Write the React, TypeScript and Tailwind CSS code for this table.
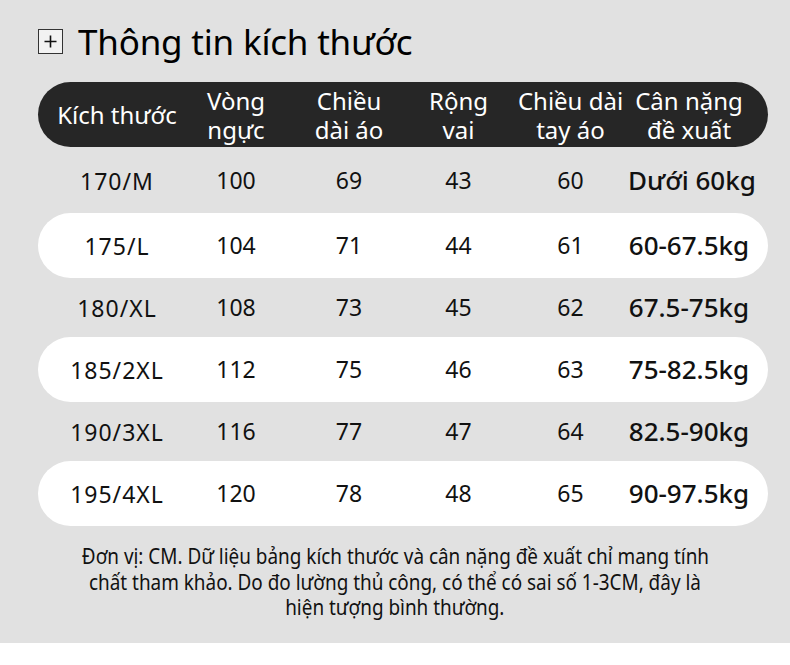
import React from "react";

const rows = [
  { size: "170/M", chest: "100", length: "69", shoulder: "43", sleeve: "60", weight: "Dưới 60kg" },
  { size: "175/L", chest: "104", length: "71", shoulder: "44", sleeve: "61", weight: "60-67.5kg" },
  { size: "180/XL", chest: "108", length: "73", shoulder: "45", sleeve: "62", weight: "67.5-75kg" },
  { size: "185/2XL", chest: "112", length: "75", shoulder: "46", sleeve: "63", weight: "75-82.5kg" },
  { size: "190/3XL", chest: "116", length: "77", shoulder: "47", sleeve: "64", weight: "82.5-90kg" },
  { size: "195/4XL", chest: "120", length: "78", shoulder: "48", sleeve: "65", weight: "90-97.5kg" },
];

const headers = [
  ["Kích thước"],
  ["Vòng", "ngực"],
  ["Chiều", "dài áo"],
  ["Rộng", "vai"],
  ["Chiều dài", "tay áo"],
  ["Cân nặng", "đề xuất"],
];

const grid = "grid grid-cols-[122px_116px_110px_109px_115px_122px] pl-[18px] pr-[18px] items-center";

const App = () => {
  return (
    <div className="w-[790px] h-[665px] bg-white" style={{ fontFamily: '"Noto Sans", "Open Sans", sans-serif' }}>
      <div className="h-[643px] bg-[#e1e1e1] text-[#111]">
        {/* Title */}
        <div className="flex items-center pl-[38px] pt-[19px] h-[64px]">
          <div className="w-[25px] h-[25px] border border-[#333] bg-[#f2f2f2] flex items-center justify-center">
            <svg width="15" height="15" viewBox="0 0 15 15">
              <path d="M7.5 1.5v12M1.5 7.5h12" stroke="#111" strokeWidth="1.6" />
            </svg>
          </div>
          <h1 className="ml-[15px] text-[35px] leading-none tracking-[-0.2px] text-black">Thông tin kích thước</h1>
        </div>

        {/* Table */}
        <div className="ml-[38px] w-[730px] mt-[18px]">
          <div className={`${grid} h-[65px] rounded-full bg-[#262626] text-white text-[24px] leading-[29px]`}>
            {headers.map((h, i) => (
              <div key={i} className="flex flex-col items-center text-center whitespace-nowrap">
                {h.map((line, j) => (
                  <span key={j}>{line}</span>
                ))}
              </div>
            ))}
          </div>

          {rows.map((r, i) => {
            const white = i % 2 === 1;
            const h = i === 0 ? "h-[66px]" : white ? "h-[65px]" : "h-[59px]";
            return (
              <div
                key={r.size}
                className={`${grid} ${h} text-[23px] ${white ? "bg-white rounded-full" : ""}`}
              >
                <div className="text-center tracking-[1px] pt-[2px]">{r.size}</div>
                <div className="text-center">{r.chest}</div>
                <div className="text-center">{r.length}</div>
                <div className="text-center">{r.shoulder}</div>
                <div className="text-center">{r.sleeve}</div>
                <div className="text-center font-medium text-[26px] whitespace-nowrap">{r.weight}</div>
              </div>
            );
          })}
        </div>

        {/* Note */}
        <div className="mt-[18px] flex flex-col items-center text-[21px] leading-[25.5px] text-[#111]">
          <span className="scale-x-[0.9] whitespace-nowrap">Đơn vị: CM. Dữ liệu bảng kích thước và cân nặng đề xuất chỉ mang tính</span>
          <span className="scale-x-[0.9] whitespace-nowrap">chất tham khảo. Do đo lường thủ công, có thể có sai số 1-3CM, đây là</span>
          <span className="scale-x-[0.9] whitespace-nowrap">hiện tượng bình thường.</span>
        </div>
      </div>
    </div>
  );
};

export default App;
